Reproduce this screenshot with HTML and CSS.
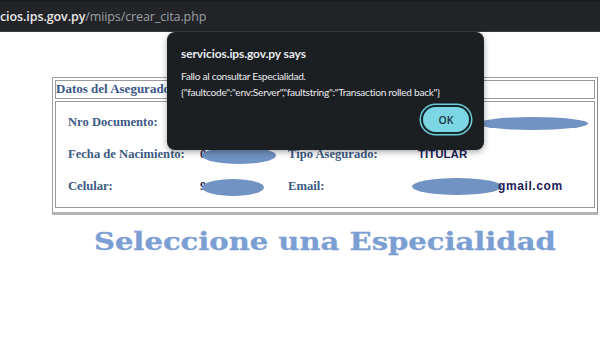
FILE: index.html
```html
<!DOCTYPE html>
<html>
<head>
<meta charset="utf-8">
<link rel="stylesheet" href="styles.css">
</head>
<body>
<div class="topbar">
  <div class="url"><span class="host">cios.ips.gov.py</span><span class="path">/miips/crear_cita.php</span></div>
</div>
<main class="page">
  <table class="datos">
    <tr><th class="head">Datos del Asegurado</th></tr>
    <tr>
      <td class="body">
        <div class="grid">
          <div class="lbl">Nro Documento:</div>
          <div class="val"></div>
          <div class="lbl"></div>
          <div class="val"><span class="blur b1"></span></div>

          <div class="lbl">Fecha de Nacimiento:</div>
          <div class="val ser">0<span class="blur b2"></span></div>
          <div class="lbl">Tipo Asegurado:</div>
          <div class="val sans">TITULAR</div>

          <div class="lbl">Celular:</div>
          <div class="val ser">9<span class="blur b3"></span></div>
          <div class="lbl">Email:</div>
          <div class="val sans mail"><span class="blur b4"></span>gmail.com</div>
        </div>
      </td>
    </tr>
  </table>
  <div class="title-wrap"><h1 class="title">Seleccione una Especialidad</h1></div>
</main>
<div class="dialog">
  <div class="dtitle">servicios.ips.gov.py says</div>
  <div class="dmsg">Fallo al consultar Especialidad.<br>{"faultcode":"env:Server","faultstring":"Transaction rolled back"}</div>
  <div class="dactions"><button class="ok">OK</button></div>
</div>
</body>
</html>
```
FILE: styles.css
```css
html, body { margin: 0; padding: 0; }
body { width: 600px; height: 338px; overflow: hidden; background: #fff; position: relative; font-family: "Liberation Serif", serif; }
.topbar { height: 29px; background: #232427; border-top: 2px solid #1b1c1e; border-bottom: 1px solid #38393c; display: flex; align-items: center; overflow: hidden; }
.url { font-family: "Open Sans", "Noto Sans", sans-serif; font-size: 12.5px; letter-spacing: -0.1px; }
.host { color: #e8e8e8; font-weight: 600; }
.path { color: #9aa0a6; }
.page { padding: 45px 2px 0 52px; }
.datos { width: 546px; border-collapse: separate; border-spacing: 2px; border: 1px solid #a0a0a0; border-bottom: 3px solid #b4b4b4; border-right-color: #8a8a8a; padding-bottom: 2px; }
.head { text-align: left; font-weight: bold; font-size: 13px; color: #3a5785; border: 1px solid #9a9a9a; padding: 1px 0 2px; line-height: 14px; }
.body { border: 1px solid #9a9a9a; padding: 12px 0 13px 12px; }
.grid { display: grid; grid-template-columns: 132px 88px 130px 1fr; row-gap: 16px; align-items: center; }
.lbl { font-weight: bold; font-size: 12.6px; color: #3d5a83; height: 16px; line-height: 16px; white-space: nowrap; }
.val { height: 16px; line-height: 16px; white-space: nowrap; }
.ser { font-weight: bold; font-size: 12.5px; color: #1b1f5a; }
.sans { font-family: "Liberation Sans", sans-serif; font-weight: bold; font-size: 11.5px; color: #1c2058; }
.mail { font-size: 12px; letter-spacing: 0.6px; }
.blur { display: inline-block; background: #7193c3; border-radius: 50%; vertical-align: middle; }
.b1 { width: 110px; height: 13px; margin-left: 60px; }
.b2 { width: 74px; height: 17px; margin-left: -4px; }
.b3 { width: 62px; height: 17px; margin-left: -4px; }
.b4 { width: 90px; height: 17px; margin-left: -6px; margin-right: -4px; }
.title-wrap { margin-top: 12px; text-align: center; }
.title { display: inline-block; margin: 0; font-family: "DejaVu Serif", serif; font-size: 24px; font-weight: bold; color: #7b9ed3; transform: scaleX(1.21); -webkit-text-stroke: 0.3px #7b9ed3; }
.dialog { position: absolute; left: 167px; top: 32px; width: 317px; height: 118px; box-sizing: border-box; background: #1c1f22; border-radius: 8px; box-shadow: 0 2px 6px rgba(0,0,0,0.35); padding: 13px 14px 0; font-family: "Lato", "Noto Sans", sans-serif; color: #e8eaed; }
.dtitle { font-size: 12px; font-weight: bold; line-height: 18px; letter-spacing: -0.1px; }
.dmsg { margin-top: 5px; font-size: 10.2px; line-height: 16px; letter-spacing: -0.3px; white-space: nowrap; }
.dactions { display: flex; justify-content: flex-end; margin-top: 5px; }
.ok { width: 50px; height: 29px; border-radius: 15px; background: #7dd6e4; border: 2px solid #12292c; box-shadow: 0 0 0 1.5px #6ccbd9; color: #1a3a40; font-family: "Open Sans", "Noto Sans", sans-serif; font-size: 10.5px; font-weight: 600; padding: 0; margin-right: -1px; }
```
